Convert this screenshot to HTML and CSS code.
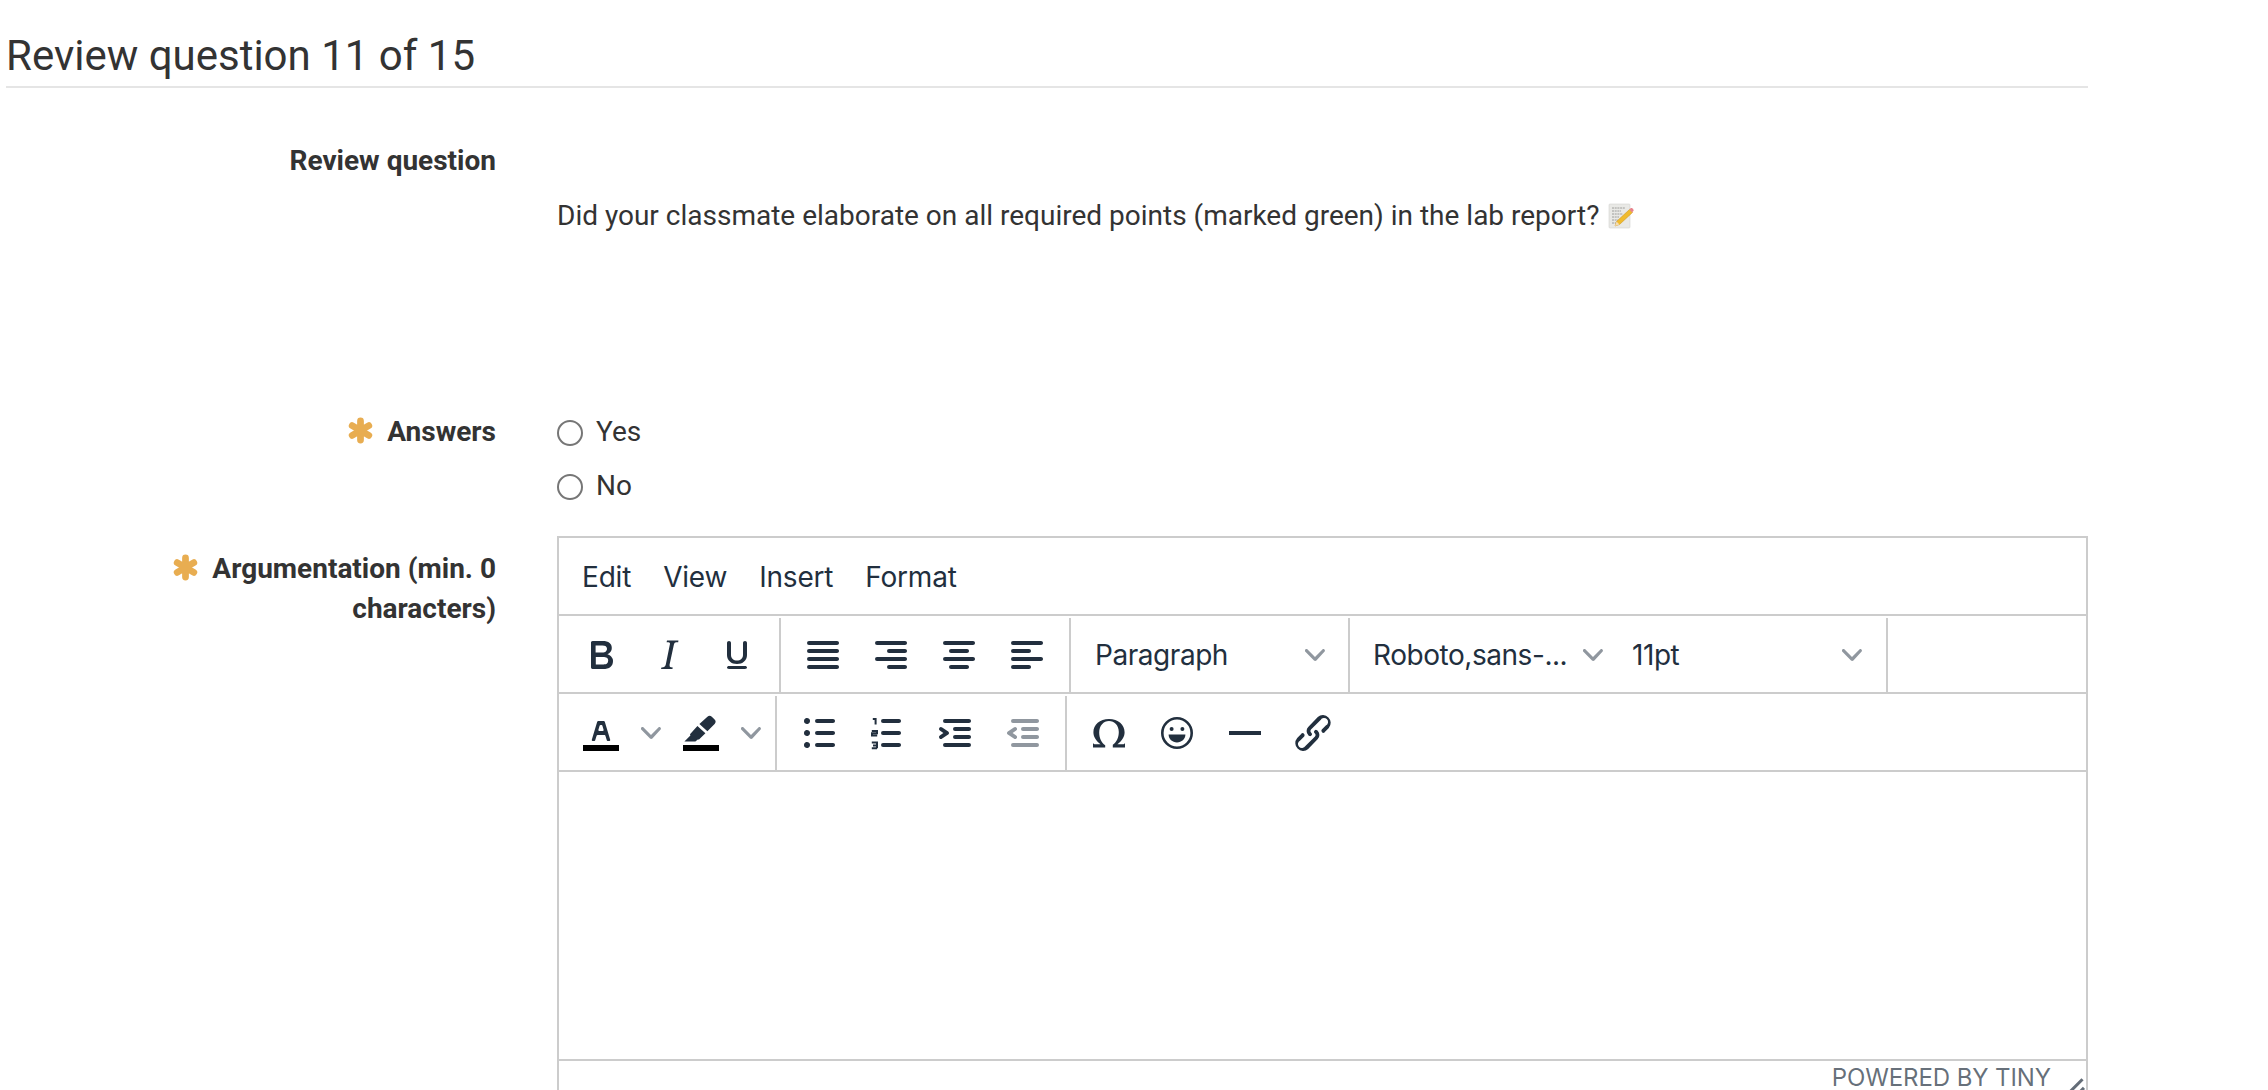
FILE: index.html
```html
<!DOCTYPE html>
<html lang="en">
<head>
    <meta charset="UTF-8">
    <meta name="viewport" content="width=device-width, initial-scale=1.0">
    <title>Review question 11 of 15</title>
    <link rel="stylesheet" href="styles.css">
</head>
<body>
    <main class="page">
        <h2 class="section-title">Review question 11 of 15</h2>

        <div class="field field-question">
            <div class="field-label">Review question</div>
            <div class="question-text">
                Did your classmate elaborate on all required points (marked green) in the lab report?
                <svg class="note-emoji" viewBox="0 0 26 26" aria-hidden="true">
                    <rect x="1" y="1" width="21" height="24" rx="1" fill="#e9e9e6" stroke="#d5d5d2" stroke-width=".6"/>
                    <path d="M4 5h13M4 8h9M4 11h11M4 14h7M4 17h6M4 20h4" stroke="#8a8a88" stroke-width=".8" stroke-dasharray="2 .7" fill="none"/>
                    <path d="M21.5 6.5l3 3L11.5 21.5l-4.5 1.5 1.5-4.5z" fill="#f0bb2e" stroke="#c98f14" stroke-width=".5"/>
                    <path d="M21.5 6.5l1.2-1.2c.5-.4 1-.4 1.5 0l1.2 1.3c.4.5.4 1 0 1.5l-1.4 1.4z" fill="#e8838c"/>
                    <path d="M8.5 18.5l-1.5 4.5 4.5-1.5z" fill="#f3dcb4"/>
                </svg>
            </div>
        </div>

        <div class="field field-answers">
            <div class="field-label">
                <svg class="required" viewBox="0 0 24 24" aria-hidden="true"><path d="M12 3.500v17M4.600 7.700l14.800 8.600M19.400 7.700L4.600 16.300"/></svg>
                Answers
            </div>
            <div class="options">
                <label class="option"><input type="radio" name="answer"> Yes</label>
                <label class="option"><input type="radio" name="answer"> No</label>
            </div>
        </div>

        <div class="field field-editor">
            <div class="field-label">
                <svg class="required" viewBox="0 0 24 24" aria-hidden="true"><path d="M12 3.500v17M4.600 7.700l14.800 8.600M19.400 7.700L4.600 16.300"/></svg>
                Argumentation (min. 0 characters)
            </div>
            <div class="editor">
                <div class="menubar">
                    <span class="menu-item">Edit</span>
                    <span class="menu-item">View</span>
                    <span class="menu-item">Insert</span>
                    <span class="menu-item">Format</span>
                </div>

                <div class="toolbar">
                    <div class="tool-group">
                        <span class="tool"><svg viewBox="0 0 24 24"><path d="M7.8 19c-.3 0-.5 0-.6-.2l-.2-.5V5.7c0-.2 0-.4.2-.5l.6-.2h5c1.5 0 2.7.3 3.5 1 .7.6 1.1 1.4 1.1 2.5a3 3 0 01-.6 1.9c-.4.6-1 1-1.6 1.2.4.1.9.3 1.3.6s.8.7 1 1.2c.4.4.5 1 .5 1.6 0 1.3-.4 2.3-1.3 3-.8.7-2.1 1-3.8 1H7.8zm5-8.3c.6 0 1.2-.1 1.6-.5.4-.3.6-.7.6-1.3 0-1.1-.8-1.7-2.3-1.7H9.3v3.5h3.4zm.5 6c.7 0 1.3-.1 1.7-.4.4-.4.6-.9.6-1.5s-.2-1-.7-1.4c-.4-.3-1-.4-2-.4H9.4v3.8h4z"/></svg></span>
                        <span class="tool"><svg viewBox="0 0 24 24"><path d="M16.7 4.7l-.1.9h-.3c-.6 0-1 0-1.4.3-.3.3-.4.6-.5 1.1l-2.1 9.8v.6c0 .5.4.8 1.4.8h.2l-.2.8H8l.2-.8h.2c1.1 0 1.8-.5 2-1.5l2-9.8.1-.5c0-.6-.4-.8-1.4-.8h-.3l.2-.9h5.8z"/></svg></span>
                        <span class="tool"><svg viewBox="0 0 24 24"><path d="M16 5c.6 0 1 .4 1 1v6c0 2.800-2.200 4.500-5 4.500S7 14.800 7 12V6c0-.6.4-1 1-1s1 .4 1 1v6c0 1.700 1.300 2.800 3 2.800s3-1.100 3-2.800V6c0-.6.4-1 1-1zM8 17.500h8c.6 0 1 .3 1 .8s-.4.7-1 .7H8c-.6 0-1-.2-1-.7s.4-.8 1-.8z"/></svg></span>
                    </div>
                    <div class="tool-group">
                        <span class="tool"><svg viewBox="0 0 24 24"><path d="M5 5h14c.6 0 1 .4 1 1s-.4 1-1 1H5a1 1 0 110-2zm0 4h14c.6 0 1 .4 1 1s-.4 1-1 1H5a1 1 0 110-2zm0 4h14c.6 0 1 .4 1 1s-.4 1-1 1H5a1 1 0 010-2zm0 4h14c.6 0 1 .4 1 1s-.4 1-1 1H5a1 1 0 010-2z"/></svg></span>
                        <span class="tool"><svg viewBox="0 0 24 24"><path d="M5 5h14c.6 0 1 .4 1 1s-.4 1-1 1H5a1 1 0 110-2zm6 4h8c.6 0 1 .4 1 1s-.4 1-1 1h-8a1 1 0 010-2zm0 8h8c.6 0 1 .4 1 1s-.4 1-1 1h-8a1 1 0 010-2zm-6-4h14c.6 0 1 .4 1 1s-.4 1-1 1H5a1 1 0 010-2z"/></svg></span>
                        <span class="tool"><svg viewBox="0 0 24 24"><path d="M5 5h14c.6 0 1 .4 1 1s-.4 1-1 1H5a1 1 0 110-2zm3 4h8c.6 0 1 .4 1 1s-.4 1-1 1H8a1 1 0 110-2zm0 8h8c.6 0 1 .4 1 1s-.4 1-1 1H8a1 1 0 010-2zm-3-4h14c.6 0 1 .4 1 1s-.4 1-1 1H5a1 1 0 010-2z"/></svg></span>
                        <span class="tool"><svg viewBox="0 0 24 24"><path d="M5 5h14c.6 0 1 .4 1 1s-.4 1-1 1H5a1 1 0 110-2zm0 4h8c.6 0 1 .4 1 1s-.4 1-1 1H5a1 1 0 110-2zm0 8h8c.6 0 1 .4 1 1s-.4 1-1 1H5a1 1 0 010-2zm0-4h14c.6 0 1 .4 1 1s-.4 1-1 1H5a1 1 0 010-2z"/></svg></span>
                    </div>
                    <div class="tool-group select-group">
                        <span class="select select-block">Paragraph<svg class="chevron" viewBox="0 0 10 10"><path d="M8.7 2.2c.3-.3.8-.3 1 0 .4.4.4.9 0 1.2L5.7 7.8c-.3.3-.9.3-1.2 0L.2 3.4a.8.8 0 010-1.2c.3-.3.8-.3 1.1 0L5 6l3.7-3.8z"/></svg></span>
                    </div>
                    <div class="tool-group select-group">
                        <span class="select select-font">Roboto,sans-...<svg class="chevron" viewBox="0 0 10 10"><path d="M8.7 2.2c.3-.3.8-.3 1 0 .4.4.4.9 0 1.2L5.7 7.8c-.3.3-.9.3-1.2 0L.2 3.4a.8.8 0 010-1.2c.3-.3.8-.3 1.1 0L5 6l3.7-3.8z"/></svg></span>
                        <span class="select select-size">11pt<svg class="chevron" viewBox="0 0 10 10"><path d="M8.7 2.2c.3-.3.8-.3 1 0 .4.4.4.9 0 1.2L5.7 7.8c-.3.3-.9.3-1.2 0L.2 3.4a.8.8 0 010-1.2c.3-.3.8-.3 1.1 0L5 6l3.7-3.8z"/></svg></span>
                    </div>
                </div>

                <div class="toolbar">
                    <div class="tool-group">
                        <span class="tool"><svg viewBox="0 0 24 24"><path d="M8.7 16h-.8a.5.5 0 01-.5-.6l2.7-9c.1-.3.3-.4.5-.4h2.8c.2 0 .4.1.5.4l2.7 9a.5.5 0 01-.5.6h-.8a.5.5 0 01-.4-.4l-.7-2.2c0-.3-.3-.4-.5-.4h-3.400c-.2 0-.4.1-.5.4l-.7 2.200c0 .3-.2.4-.4.4zm2.600-7.600l-.6 2a.5.5 0 00.5.6h1.600a.5.5 0 00.5-.6l-.6-2c0-.3-.3-.4-.5-.4h-.4c-.2 0-.4.1-.5.4z"/><path class="swatch" d="M3 18h18v3H3z"/></svg></span>
                        <span class="tool-arrow"><svg class="chevron" viewBox="0 0 10 10"><path d="M8.7 2.2c.3-.3.8-.3 1 0 .4.4.4.9 0 1.2L5.7 7.8c-.3.3-.9.3-1.2 0L.2 3.4a.8.8 0 010-1.2c.3-.3.8-.3 1.1 0L5 6l3.7-3.8z"/></svg></span>
                        <span class="tool"><svg viewBox="0 0 24 24"><path d="M15.200 3.900a1.600 1.600 0 012.200 0l1.400 1.400a1.600 1.600 0 010 2.200l-3.600 3.600-4-3.600z"/><path d="M10.200 8.500l4 3.600-3.200 3.100-.6.100-1.200 1H3.700l3-3-.2-.7z"/><path class="swatch" d="M3 18h18v3H3z"/></svg></span>
                        <span class="tool-arrow"><svg class="chevron" viewBox="0 0 10 10"><path d="M8.7 2.2c.3-.3.8-.3 1 0 .4.4.4.9 0 1.2L5.7 7.8c-.3.3-.9.3-1.2 0L.2 3.4a.8.8 0 010-1.2c.3-.3.8-.3 1.1 0L5 6l3.7-3.8z"/></svg></span>
                    </div>
                    <div class="tool-group">
                        <span class="tool"><svg viewBox="0 0 24 24"><path d="M11 5h8c.6 0 1 .4 1 1s-.4 1-1 1h-8a1 1 0 010-2zm0 6h8c.6 0 1 .4 1 1s-.4 1-1 1h-8a1 1 0 010-2zm0 6h8c.6 0 1 .4 1 1s-.4 1-1 1h-8a1 1 0 010-2zM4.500 6c0-.4.1-.8.4-1 .3-.4.7-.5 1.100-.5s.8.1 1 .4c.4.3.5.7.5 1.100s-.1.8-.4 1c-.3.4-.7.5-1.100.5s-.8-.1-1-.4c-.4-.3-.5-.7-.5-1.100zm0 6c0-.4.1-.8.4-1 .3-.4.7-.5 1.100-.5s.8.1 1 .4c.4.3.5.7.5 1.100s-.1.8-.4 1c-.3.4-.7.5-1.100.5s-.8-.1-1-.4c-.4-.3-.5-.7-.5-1.100zm0 6c0-.4.1-.8.4-1 .3-.4.7-.5 1.100-.5s.8.1 1 .4c.4.3.5.7.5 1.100s-.1.8-.4 1c-.3.4-.7.5-1.100.5s-.8-.1-1-.4c-.4-.3-.5-.7-.5-1.100z"/></svg></span>
                        <span class="tool"><svg viewBox="0 0 24 24"><path d="M10 17h8c.6 0 1 .4 1 1s-.4 1-1 1h-8a1 1 0 010-2zm0-6h8c.6 0 1 .4 1 1s-.4 1-1 1h-8a1 1 0 010-2zm0-6h8c.6 0 1 .4 1 1s-.4 1-1 1h-8a1 1 0 110-2z"/><path class="digits" d="M4.900 5h1.400v2.800M4.400 11h2.600v1.100H4.500v1.200h2.600M4.400 16.800h2.600v2.800M5 18.200h2M4.400 19.600h2.600"/></svg></span>
                        <span class="tool"><svg viewBox="0 0 24 24"><path d="M7 5h12c.6 0 1 .4 1 1s-.4 1-1 1H7a1 1 0 110-2zm5 4h7c.6 0 1 .4 1 1s-.4 1-1 1h-7a1 1 0 010-2zm0 4h7c.6 0 1 .4 1 1s-.4 1-1 1h-7a1 1 0 010-2zm-5 4h12a1 1 0 010 2H7a1 1 0 010-2zm-2.600-3.800L6.200 12l-1.800-1.200a1 1 0 011.200-1.600l3 2a1 1 0 010 1.600l-3 2a1 1 0 11-1.200-1.600z"/></svg></span>
                        <span class="tool tool-disabled"><svg viewBox="0 0 24 24"><path d="M7 5h12c.6 0 1 .4 1 1s-.4 1-1 1H7a1 1 0 110-2zm5 4h7c.6 0 1 .4 1 1s-.4 1-1 1h-7a1 1 0 010-2zm0 4h7c.6 0 1 .4 1 1s-.4 1-1 1h-7a1 1 0 010-2zm-5 4h12a1 1 0 010 2H7a1 1 0 010-2zm1.600-3.800a1 1 0 01-1.200 1.600l-3-2a1 1 0 010-1.600l3-2a1 1 0 011.200 1.600L6.800 12l1.800 1.200z"/></svg></span>
                    </div>
                    <div class="tool-group tool-group-last">
                        <span class="tool"><svg viewBox="0 0 24 24"><path d="M4 19.300v-2.200l.7.5h3.100C5.600 16 4.200 14 4.200 11.600 4.200 7.800 7.400 5 12 5s7.800 2.800 7.800 6.600c0 2.400-1.400 4.400-3.600 6h3.100l.7-.5v2.200h-6.100v-1.400c1.900-1.400 3-3.600 3-6.400 0-3.400-2.200-5.500-4.900-5.500S7.100 8.300 7.100 11.700c0 2.800 1.100 5 3 6.400v1.200z"/></svg></span>
                        <span class="tool"><svg viewBox="0 0 24 24"><path d="M12 4a8 8 0 110 16 8 8 0 010-16zm0 1.300a6.700 6.700 0 100 13.400 6.700 6.700 0 000-13.400z"/><circle cx="9.300" cy="10" r="1"/><circle cx="14.700" cy="10" r="1"/><path d="M7.800 12.800h8.400c0 2.300-1.900 3.900-4.200 3.900s-4.200-1.600-4.200-3.900z"/></svg></span>
                        <span class="tool"><svg viewBox="0 0 24 24"><path d="M4 11h16v2H4z"/></svg></span>
                        <span class="tool"><svg viewBox="0 0 24 24"><path d="M6.200 12.300a1 1 0 011.400 1.400l-2 2a2 2 0 102.600 2.800l4.800-4.800a1 1 0 000-1.400 1 1 0 111.400-1.300 2.900 2.900 0 010 4L9.600 20a3.900 3.900 0 01-5.500-5.500l2-2zm11.600-.6a1 1 0 01-1.400-1.400l2-2a2 2 0 10-2.600-2.800L11 10.300a1 1 0 000 1.400A1 1 0 119.600 13a2.900 2.900 0 010-4L14.400 4a3.900 3.900 0 015.500 5.500l-2 2z"/></svg></span>
                    </div>
                </div>

                <div class="edit-area"></div>

                <div class="statusbar">
                    <span class="branding">POWERED BY TINY</span>
                    <svg class="resize-handle" viewBox="0 0 10 10"><path d="M8.100 .9l-7.400 7.400.9.900 7.400-7.400zM8.700 4.500l-4 4 .9.900 4-4z"/></svg>
                </div>
            </div>
        </div>
    </main>
</body>
</html>
```

FILE: styles.css
```css
html, body {
    height: 1090px;
    overflow: hidden;
}
body {
    margin: 0;
    background-color: #fff;
    color: #333;
    font-family: Roboto, "Liberation Sans", sans-serif;
    font-size: 28px;
    line-height: 40px;
}
.page {
    width: 2082px;
    padding-left: 6px;
}
.section-title {
    margin: 0;
    padding: 29px 0 4px;
    height: 53px;
    border-bottom: 2px solid #e5e5e5;
    font-size: 42px;
    font-weight: 400;
    line-height: 53px;
}
.field {
    display: grid;
    grid-template-columns: 490px 1fr;
    column-gap: 61px;
}
.field-label {
    padding-left: 150px;
    font-weight: 700;
    text-align: right;
}
.field-question {
    padding-top: 53px;
    height: 270px;
}
.question-text {
    padding-top: 55px;
}
.note-emoji {
    width: 26px;
    height: 26px;
    margin-left: 2px;
    vertical-align: -4px;
}
.required {
    width: 27px;
    height: 27px;
    margin-right: 6px;
    vertical-align: -3px;
    fill: none;
    stroke: #e8ad51;
    stroke-width: 6;
    stroke-linecap: round;
}
.field-answers {
    box-sizing: border-box;
    height: 125px;
    padding-top: 1px;
}
.options {
    display: flex;
    flex-direction: column;
    gap: 14px;
}
.option {
    display: flex;
    align-items: center;
    gap: 13px;
}
.option input {
    appearance: none;
    box-sizing: border-box;
    width: 26px;
    height: 26px;
    margin: 2px 0 0;
    background-color: #fff;
    border: 2px solid #767676;
    border-radius: 50%;
}
.field-editor .field-label {
    padding-top: 13px;
}

/* editor */
.editor {
    border: 2px solid #ccc;
    color: #222f3e;
    font-family: Inter, Roboto, sans-serif;
    font-size: 28px;
}
.menubar {
    display: flex;
    align-items: center;
    box-sizing: border-box;
    height: 76px;
    padding: 2px 0 0 23px;
    letter-spacing: -.2px;
}
.menu-item {
    margin-right: 32px;
}
.toolbar {
    display: flex;
    box-sizing: border-box;
    height: 78px;
    padding-top: 2px;
    border-top: 2px solid #ccc;
}
.tool-group {
    display: flex;
    align-items: center;
    padding: 0 8px;
    border-right: 2px solid #ccc;
}
.tool-group-last {
    border-right: none;
}
.tool {
    display: flex;
    justify-content: center;
    align-items: center;
    width: 68px;
    height: 68px;
}
.tool svg {
    width: 48px;
    height: 48px;
    fill: #222f3e;
}
.tool-disabled svg {
    fill: #90979f;
}
.tool .swatch {
    fill: #000;
}
.tool .digits {
    fill: none;
    stroke: #222f3e;
    stroke-width: 1;
}
.tool-arrow {
    display: flex;
    justify-content: center;
    align-items: center;
    width: 32px;
    height: 68px;
}
.chevron {
    width: 20px;
    height: 20px;
    fill: #90979f;
}
.select-group {
    padding: 0;
}
.select {
    display: flex;
    justify-content: space-between;
    align-items: center;
    box-sizing: border-box;
    letter-spacing: -.45px;
    white-space: nowrap;
}
.select-block {
    width: 277px;
    padding: 0 23px 0 24px;
}
.select-font {
    width: 265px;
    padding: 0 12px 0 23px;
}
.select-size {
    width: 271px;
    padding: 0 24px 0 17px;
}
.edit-area {
    height: 287px;
    border-top: 2px solid #ccc;
    background-color: #fff;
}
.statusbar {
    display: flex;
    justify-content: flex-end;
    align-items: flex-start;
    height: 37px;
    border-top: 2px solid #ccc;
}
.branding {
    margin-top: 4px;
    font-size: 24px;
    line-height: 26px;
    letter-spacing: -.1px;
    color: rgba(34, 47, 62, .7);
}
.resize-handle {
    width: 24px;
    height: 24px;
    margin: 15px 0 0 11px;
    fill: rgba(34, 47, 62, .7);
}
```
